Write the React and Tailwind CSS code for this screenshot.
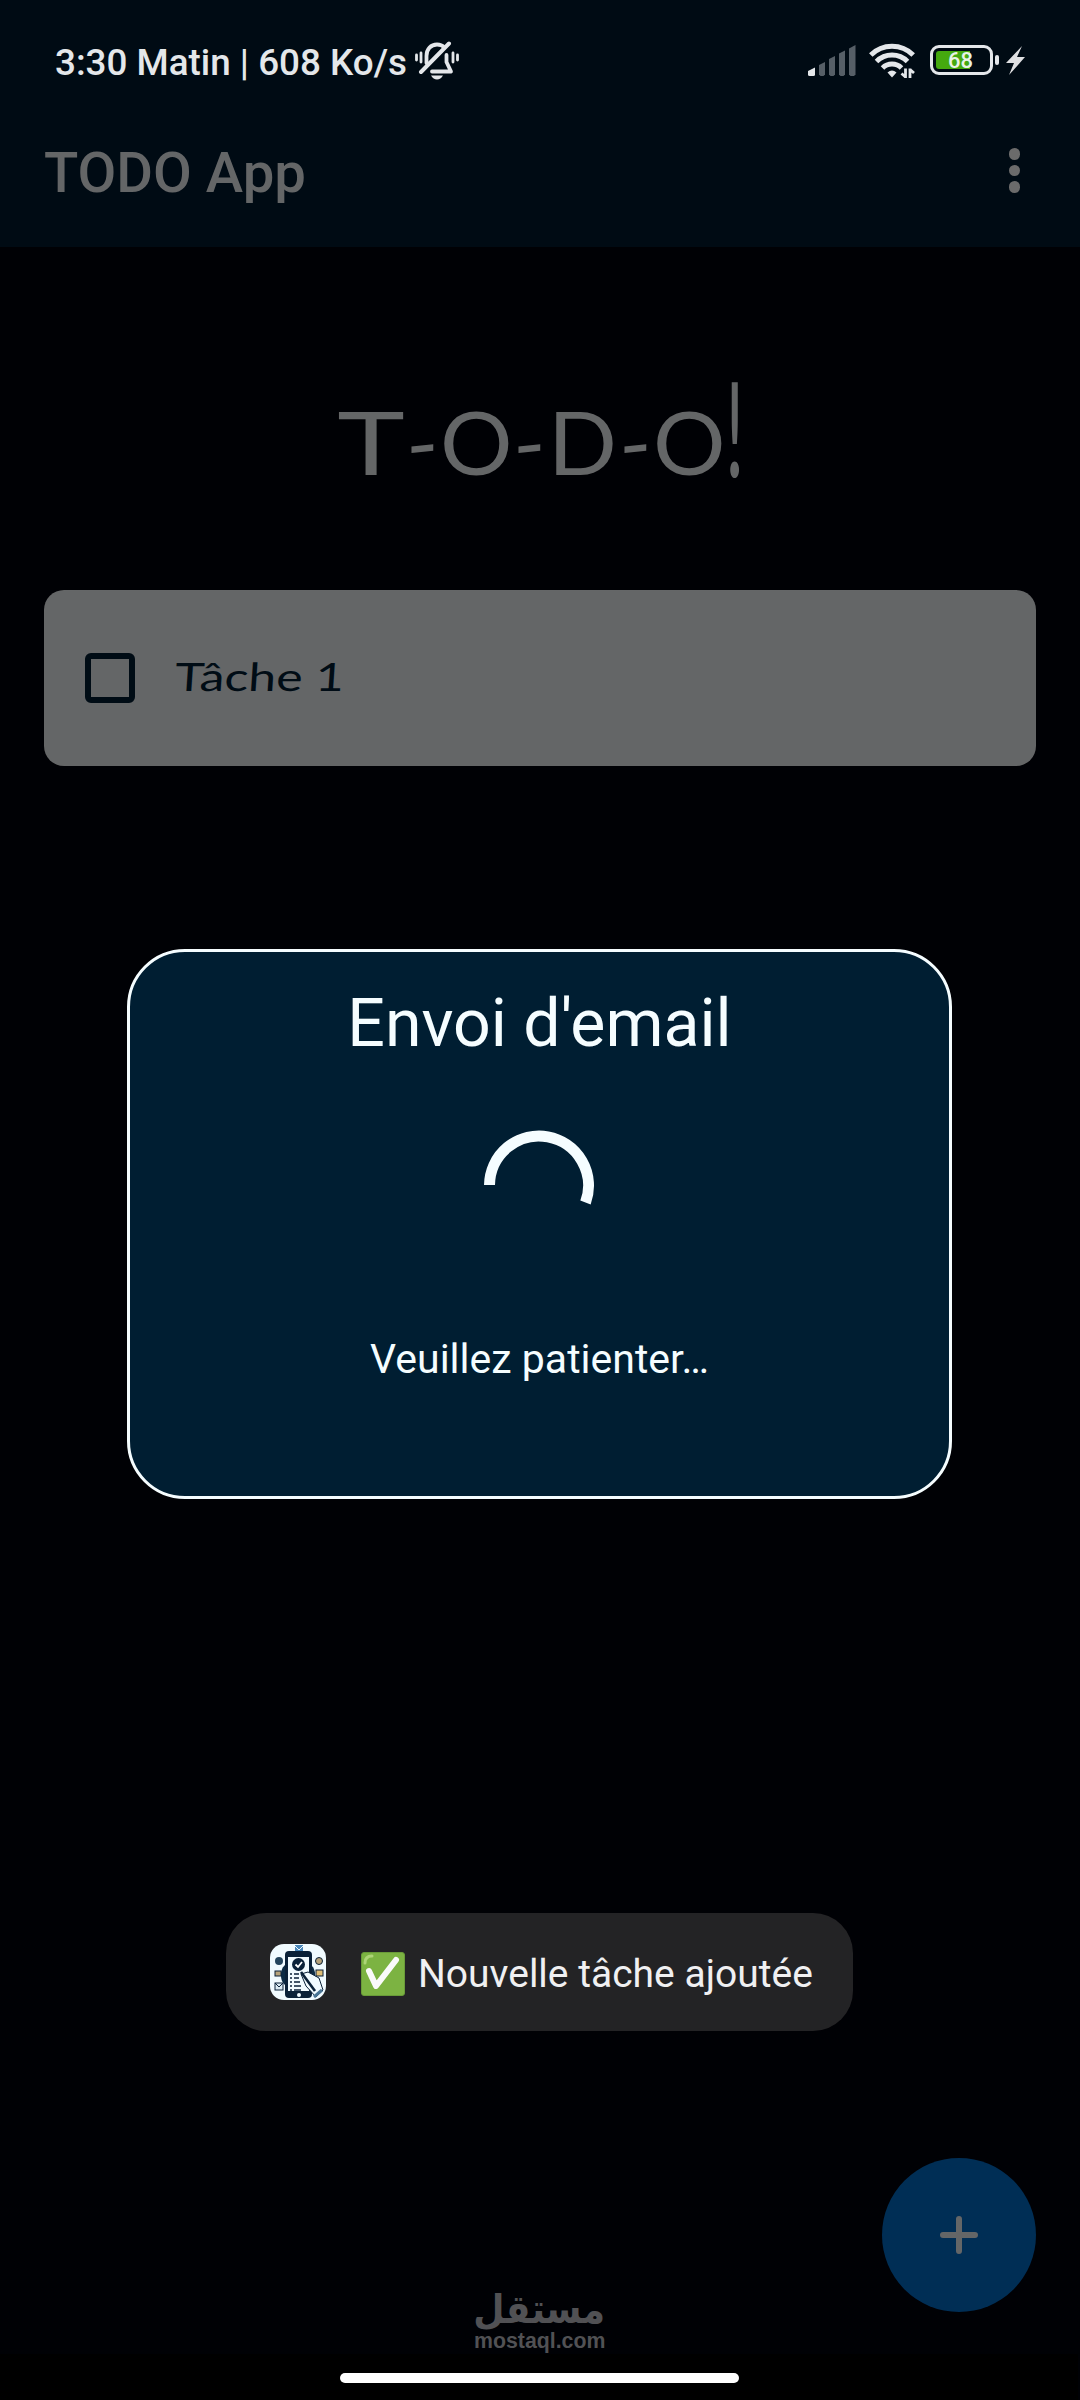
import React from 'react';

const BellOff = () => (
  <svg width="44" height="40" viewBox="0 0 44 40" fill="none" stroke="#e4e7ea" strokeWidth="3.800" strokeLinecap="round">
    <path d="M11.5 22V15C11.5 8 16 3.5 22 3.5C25 3.5 27.5 4.5 29.5 6.5" />
    <path d="M31.500 14V21L36 30.500H17" strokeLinejoin="round" />
    <path d="M6 31L34 2.5" strokeWidth="4" />
    <path d="M1.500 14V19M6 12V21M38 12V21M42.500 14V19" strokeWidth="2.800" />
    <path d="M16 34.500H28C26.500 37 24.500 38.500 22 38.500C19.500 38.500 17.500 37 16 34.500Z" fill="#e4e7ea" stroke="none" />
  </svg>
);

const Signal = () => (
  <svg width="48" height="31" viewBox="0 0 48 31" fill="#565f67">
    <path d="M0 26L7 22.500V29.500Q7 31 5.500 31H1.500Q0 31 0 29.500Z" fill="#e4e7ea" />
    <path d="M11 20L17 17V29.500L15.500 31H12.500L11 29.500Z" />
    <path d="M21 14L27 11V29.500L25.500 31H22.500L21 29.500Z" />
    <path d="M31 8.500L37 5.500V29.500L35.500 31H32.500L31 29.500Z" />
    <path d="M41 3.500L47.500 0V29.500L46 31H42.500L41 29.500Z" />
  </svg>
);

const Wifi = () => (
  <svg width="47" height="36" viewBox="0 0 47 36" fill="none" stroke="#e4e7ea" strokeWidth="5">
    <path d="M1.800 12A30 30 0 0 1 44.200 12" />
    <path d="M7.500 18.500A22 22 0 0 1 38.500 18.500" />
    <path d="M13.500 25A13.500 13.500 0 0 1 32.500 25" />
    <path d="M18.500 29.500Q23 25.500 27.500 29.500L23 34.500Z" fill="#e4e7ea" stroke="none" />
    <path d="M36.500 25.500V35M36.500 34L32.500 30.500" strokeWidth="2.800" />
    <path d="M41 35V25.500M41 26.500L45 30" strokeWidth="2.800" />
  </svg>
);

const AppIcon = () => (
  <svg width="56" height="56" viewBox="0 0 56 56">
    <rect width="56" height="56" rx="14" fill="#f1fbff" />
    <rect x="11" y="18" width="34" height="26" rx="12" fill="#0b2b44" />
    <path d="M25 1H33V8H25Z" fill="#4a86b8" />
    <path d="M25 2L29 6L33 2" stroke="#f1fbff" fill="none" />
    <rect x="15" y="7" width="27" height="47" rx="4" fill="#0a2138" />
    <rect x="18" y="13" width="21" height="34" fill="#f1fbff" />
    <circle cx="28.500" cy="20.500" r="6.500" fill="#0a2138" />
    <path d="M25.500 20.500L28 23L32 18" stroke="#fff" strokeWidth="1.800" fill="none" />
    <path d="M20 30H22M24 30H29M20 34H22M24 34H29M20 38H22M24 38H30M20 42H22M24 42H31M20 46H22M24 46H31" stroke="#0a2138" strokeWidth="1.600" />
    <path d="M31 30L38 28L49 34L53 46L46 53L36 42Z" fill="#f1fbff" stroke="#0a2138" />
    <path d="M31 28L45 47" stroke="#0a2138" strokeWidth="2.600" />
    <path d="M44 53L52 46" stroke="#4a7595" strokeWidth="3" />
    <circle cx="29" cy="51" r="2" fill="#f1fbff" />
    <circle cx="9" cy="17" r="4" fill="#24455d" />
    <circle cx="49" cy="17" r="3.500" fill="#b5a27b" stroke="#0a2138" />
    <rect x="5" y="27" width="6" height="5" fill="#b5a27b" stroke="#0a2138" />
    <rect x="46" y="26" width="7" height="6" fill="#dfbd75" stroke="#0a2138" />
    <rect x="5" y="39" width="8" height="7" fill="#dcecf4" stroke="#0a2138" />
    <path d="M5 39L9 43L13 39" fill="none" stroke="#0a2138" />
  </svg>
);

const CheckEmoji = () => (
  <svg width="44" height="44" viewBox="0 0 44 44">
    <rect x="0.500" y="0.500" width="43" height="43" rx="2.500" fill="#7cb342" stroke="#699b38" />
    <path d="M4 11Q4 4 11 4" stroke="#add477" strokeWidth="3" strokeLinecap="round" fill="none" />
    <path d="M8 19L15 34L35 8" stroke="#fafafa" strokeWidth="6" strokeLinecap="round" strokeLinejoin="round" fill="none" />
  </svg>
);

const StatusBar = () => (
  <div className="flex h-[98px] pl-[55px]">
    <div className="mt-[41px] w-[352px] text-[36.800px] leading-[44px] font-medium whitespace-nowrap text-[#e4e7ea]">
      3:30 Matin | 608 Ko/s
    </div>
    <div className="mt-[41px] ml-[8px]"><BellOff /></div>
    <div className="mt-[45px] ml-[349px]"><Signal /></div>
    <div className="mt-[43px] ml-[13px]"><Wifi /></div>
    <div className="mt-[45px] ml-[14px] flex h-[30px] items-center">
      <div className="h-[30px] w-[63px] rounded-[9px] border-[3px] border-[#e4e7ea] p-[3px]">
        <div className="h-[18px] w-[34px] rounded-l-[3px] bg-[#45a90f] pl-[12px] text-[22px] leading-[20px] font-medium text-[#e9f3e6]">68</div>
      </div>
      <div className="ml-[2px] h-[10px] w-[4px] rounded-[2px] bg-[#e4e7ea]" />
    </div>
    <svg className="mt-[46px] ml-[7px]" width="19" height="29" viewBox="0 0 19 29" fill="#dfe0e2">
      <path d="M16 0L0 17H8L3 29L19 11H11Z" />
    </svg>
  </div>
);

const AppBar = () => (
  <div className="flex h-[149px] justify-between pr-[60px] pl-[44px]">
    <h1 className="mt-[43px] text-[56.300px] leading-[64px] font-medium whitespace-nowrap text-[#646667]">TODO App</h1>
    <div className="mt-[50px] flex flex-col gap-[5px]">
      <span className="size-[11.500px] rounded-full bg-[#6b6b6b]" />
      <span className="size-[11.500px] rounded-full bg-[#6b6b6b]" />
      <span className="size-[11.500px] rounded-full bg-[#6b6b6b]" />
    </div>
  </div>
);

const Heading = () => (
  <h2 className="mt-[129px] ml-[337px] flex h-[130px] font-['Lato'] text-[88px] leading-[130px] text-[#646667]">
    <span className="flex w-[68px] justify-center"><span className="scale-x-130">T</span></span>
    <span className="flex w-[35px] justify-center"><span className="-skew-y-6">-</span></span>
    <span className="flex w-[72px] justify-center"><span className="scale-x-103">O</span></span>
    <span className="flex w-[35px] justify-center"><span className="-skew-y-6">-</span></span>
    <span className="flex w-[71px] justify-center"><span className="scale-x-103">D</span></span>
    <span className="flex w-[35px] justify-center"><span className="-skew-y-6">-</span></span>
    <span className="flex w-[72px] justify-center"><span className="scale-x-103">O</span></span>
    <span className="flex w-[20px] justify-center"><span className="origin-[50%_95px] scale-x-80 scale-y-150">!</span></span>
  </h2>
);

const TaskCard = ({ label }) => (
  <div className="mx-[44px] mt-[84px] flex h-[176px] items-center rounded-[20px] bg-[#646667] pl-[41px]">
    <span className="size-[50px] rounded-[6px] border-[6px] border-[#000c15]" />
    <span className="mb-[4px] ml-[40px] origin-left scale-x-128 -skew-x-3 font-['Lato'] text-[39px] whitespace-nowrap text-[#000c15]">{label}</span>
  </div>
);

const LoadingDialog = () => (
  <div className="absolute top-[949px] left-[127px] flex h-[550px] w-[825px] flex-col items-center rounded-[58px] border-[3px] border-[#f5fdff] bg-[#001e32] text-[#f5fdff]">
    <p className="mt-[32px] text-[66.200px] leading-[80px]">Envoi d'email</p>
    <svg className="mt-[66px] mr-[1px]" width="110" height="110" viewBox="0 0 110 110" fill="none">
      <path d="M5.500 55A49.500 49.500 0 1 1 101.500 72.500" stroke="#f5fdff" strokeWidth="11" />
    </svg>
    <p className="mt-[95px] text-[41px] leading-[48px]">Veuillez patienter…</p>
  </div>
);

const Toast = () => (
  <div className="absolute top-[1913px] left-[226px] flex h-[118px] w-[627px] items-center rounded-[40px] bg-[#232325] pl-[44px]">
    <AppIcon />
    <div className="mt-[3px] ml-[35px]"><CheckEmoji /></div>
    <span className="mt-[4px] ml-[13px] text-[39px] whitespace-nowrap text-[#f0f0f2]">Nouvelle tâche ajoutée</span>
  </div>
);

const App = () => {
  return (
    <div className="relative h-[2400px] w-[1080px] overflow-hidden bg-[#000105] font-['Roboto',sans-serif]">
      <header className="h-[247px] bg-[#000b14]">
        <StatusBar />
        <AppBar />
      </header>
      <main>
        <Heading />
        <TaskCard label="Tâche 1" />
      </main>

      <LoadingDialog />
      <Toast />

      <button className="absolute top-[2158px] left-[882px] flex size-[154px] items-center justify-center rounded-full bg-[#002e55]">
        <svg width="40" height="40" viewBox="0 0 40 40" stroke="#646667" strokeWidth="6" strokeLinecap="round">
          <path d="M4 20H36M20 4V36" />
        </svg>
      </button>

      <footer className="absolute top-[2354px] left-0 flex h-[46px] w-[1078px] justify-center bg-black pt-[19px]">
        <div className="h-[10px] w-[399px] rounded-full bg-white" />
      </footer>

      <div className="absolute top-[2286px] left-[475px] w-[130px] font-bold text-[#515154]">
        <div lang="ar" dir="rtl" className="h-[43px] origin-right scale-x-[0.9] font-['DejaVu_Sans'] text-[40px] leading-[46px] whitespace-nowrap">مستقل</div>
        <div className="-ml-px font-['Liberation_Sans'] text-[21.300px] leading-[24px] whitespace-nowrap">mostaql.com</div>
      </div>
    </div>
  );
};

export default App;
